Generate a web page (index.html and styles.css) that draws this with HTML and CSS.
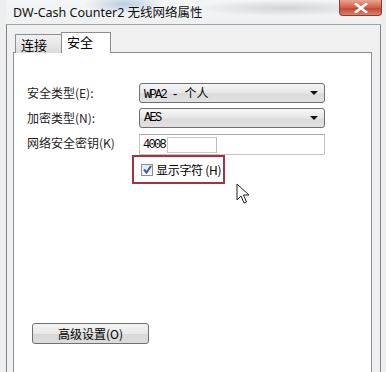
FILE: index.html
```html
<!DOCTYPE html>
<html lang="zh-CN">

<head>
  <meta charset="UTF-8">
  <meta name="viewport" content="width=device-width, initial-scale=1.0">
  <title>DW-Cash Counter2 无线网络属性</title>
  <link rel="stylesheet" href="styles.css">
</head>

<body>
  <div class="window">
    <div class="titlebar">
      <span class="title">DW-Cash Counter2 无线网络属性</span>
      <div class="close">
        <svg width="14" height="10" viewBox="0 0 14 10">
          <path d="M2 1 L12 9 M12 1 L2 9" stroke="#fff" stroke-width="2.6" stroke-linecap="square" />
        </svg>
      </div>
    </div>

    <div class="frame">
      <div class="tabs">
        <div class="tab">连接</div>
        <div class="tab active">安全</div>
      </div>

      <div class="panel">
        <div class="form">
          <label>安全类型(E):</label>
          <div class="select"><span class="value">WPA2 - <span class="cjk">个人</span></span><i class="arrow"></i></div>

          <label>加密类型(N):</label>
          <div class="select"><span class="value">AES</span><i class="arrow"></i></div>

          <label>网络安全密钥(K)</label>
          <div class="textbox"><span class="value">4008</span><span class="ime"></span></div>
        </div>

        <div class="show-chars">
          <span class="check">
            <svg width="9" height="9" viewBox="0 0 9 9">
              <path d="M1 4.5 L3.5 7.5 L8 1" fill="none" stroke="#3d5b99" stroke-width="2" />
            </svg>
          </span>
          <span class="check-label">显示字符 (H)</span>
        </div>

        <div class="advanced">高级设置(O)</div>

        <!-- 鼠标指针 -->
        <svg class="cursor" width="14" height="22" viewBox="0 0 14 22">
          <path d="M1 1 L1 17 L5 13 L8 20 L10.5 19 L7.5 12 L13 12 Z" fill="#fff" stroke="#222" stroke-width="1" stroke-linejoin="round" />
        </svg>
      </div>
    </div>
  </div>
</body>

</html>
```

FILE: styles.css
```css
* {
  margin: 0;
  padding: 0;
  box-sizing: border-box;
}

html,
body {
  height: 100%;
  overflow: hidden;
}

body {
  background: #eceeef;
  font-family: "Noto Sans", "Noto Sans CJK SC", sans-serif;
  color: #000;
}

.window {
  height: 100%;
  display: flex;
  flex-direction: column;
}

.titlebar {
  height: 25px;
  flex: none;
  display: flex;
  align-items: flex-start;
  padding-left: 7px;
  background:
    radial-gradient(ellipse 40px 10px at 118px 4px, rgba(120, 160, 200, 0.45), transparent),
    radial-gradient(ellipse 90px 8px at 280px 8px, rgba(150, 150, 150, 0.35), transparent),
    linear-gradient(#f4f5f6, #eef0f1);
  border-bottom: 1px solid #a2a2a2;
  margin: 0 5px 0 6px;
}

.title {
  font-size: 12.5px;
  line-height: 14px;
  margin-top: 6px;
  color: #111;
  white-space: nowrap;
}

.close {
  margin-left: auto;
  margin-right: -1px;
  width: 43px;
  height: 16px;
  display: flex;
  align-items: center;
  justify-content: center;
  background: linear-gradient(#e8a592, #d25f48 50%, #c54631 55%, #d8826b);
  border: 1px solid #8b3b2f;
  border-top: none;
  border-radius: 0 0 4px 4px;
}

.frame {
  flex: 1;
  display: flex;
  flex-direction: column;
  margin: 0 5px 0 6px;
  padding: 7px 8px 0 6px;
  background: #f0f0f0;
  border-left: 1px solid #838383;
  border-right: 1px solid #838383;
}

.tabs {
  display: flex;
  align-items: flex-end;
  padding-left: 2px;
  height: 21px;
  margin-bottom: -1px;
  position: relative;
  z-index: 1;
  font-family: "Noto Sans CJK SC", sans-serif;
  font-size: 13px;
}

.tab {
  height: 19px;
  width: 47px;
  padding-left: 5px;
  line-height: 19px;
  background: linear-gradient(#f2f2f2, #dcdcdc);
  border: 1px solid #8c8e94;
  border-bottom: none;
}

.tab.active {
  height: 21px;
  width: 50px;
  padding-left: 5px;
  line-height: 17px;
  margin-left: -1px;
  background: #fff;
}

.panel {
  flex: 1;
  position: relative;
  background: #fff;
  border: 1px solid #898c95;
  border-bottom: none;
  padding: 30px 0 0 13px;
}

.form {
  display: grid;
  grid-template-columns: 112px 186px;
  grid-auto-rows: 20px;
  row-gap: 5px;
  font-family: "Noto Sans CJK SC", sans-serif;
  font-size: 12px;
}

.form label {
  line-height: 20px;
  color: #222;
}

.select {
  display: flex;
  align-items: center;
  padding-left: 4px;
  padding-right: 6px;
  background: linear-gradient(#f6f6f6, #e6e6e6 50%, #dadada 55%, #e2e2e2);
  border: 1px solid #6f6f6f;
  border-radius: 3px;
}

.value {
  font-family: "Liberation Mono", "Noto Sans CJK SC", monospace;
  font-size: 12px;
  letter-spacing: -1.7px;
  white-space: nowrap;
}

.value .cjk {
  font-family: "Noto Sans CJK SC", sans-serif;
  font-size: 12px;
  letter-spacing: 0;
  margin-left: 2px;
}

.arrow {
  margin-left: auto;
  width: 0;
  height: 0;
  border-left: 4px solid transparent;
  border-right: 4px solid transparent;
  border-top: 4px solid #111;
}

.textbox {
  height: 21px;
  margin-top: 1px;
  display: flex;
  align-items: center;
  padding-left: 3px;
  border: 1px solid #c4c4c4;
  border-top-color: #a9a9a9;
}

.ime {
  width: 50px;
  height: 16px;
  margin-left: 2px;
  border: 1px solid #c8c8c8;
  border-right-color: #bcbcbc;
}

.show-chars {
  width: 93px;
  height: 29px;
  margin: 2px 0 0 105px;
  display: flex;
  align-items: center;
  gap: 3px;
  padding-left: 7px;
  border: 2px solid #a4333a;
  font-family: "Noto Sans CJK SC", sans-serif;
  font-size: 12px;
}

.check {
  flex: none;
  width: 12px;
  height: 12px;
  display: flex;
  align-items: center;
  justify-content: center;
  background: linear-gradient(#e4e6ea, #fafafa);
  border: 1px solid #8a8f99;
}

.check-label {
  white-space: nowrap;
  letter-spacing: -0.3px;
}

.advanced {
  width: 117px;
  height: 21px;
  margin: 139px 0 0 5px;
  text-align: center;
  line-height: 19px;
  font-family: "Noto Sans CJK SC", sans-serif;
  font-size: 12px;
  background: linear-gradient(#f4f4f4, #e8e8e8 50%, #d8d8d8 55%, #dcdcdc);
  border: 1px solid #707070;
  border-radius: 3px;
}

.cursor {
  position: absolute;
  left: 222px;
  top: 130px;
}
```
